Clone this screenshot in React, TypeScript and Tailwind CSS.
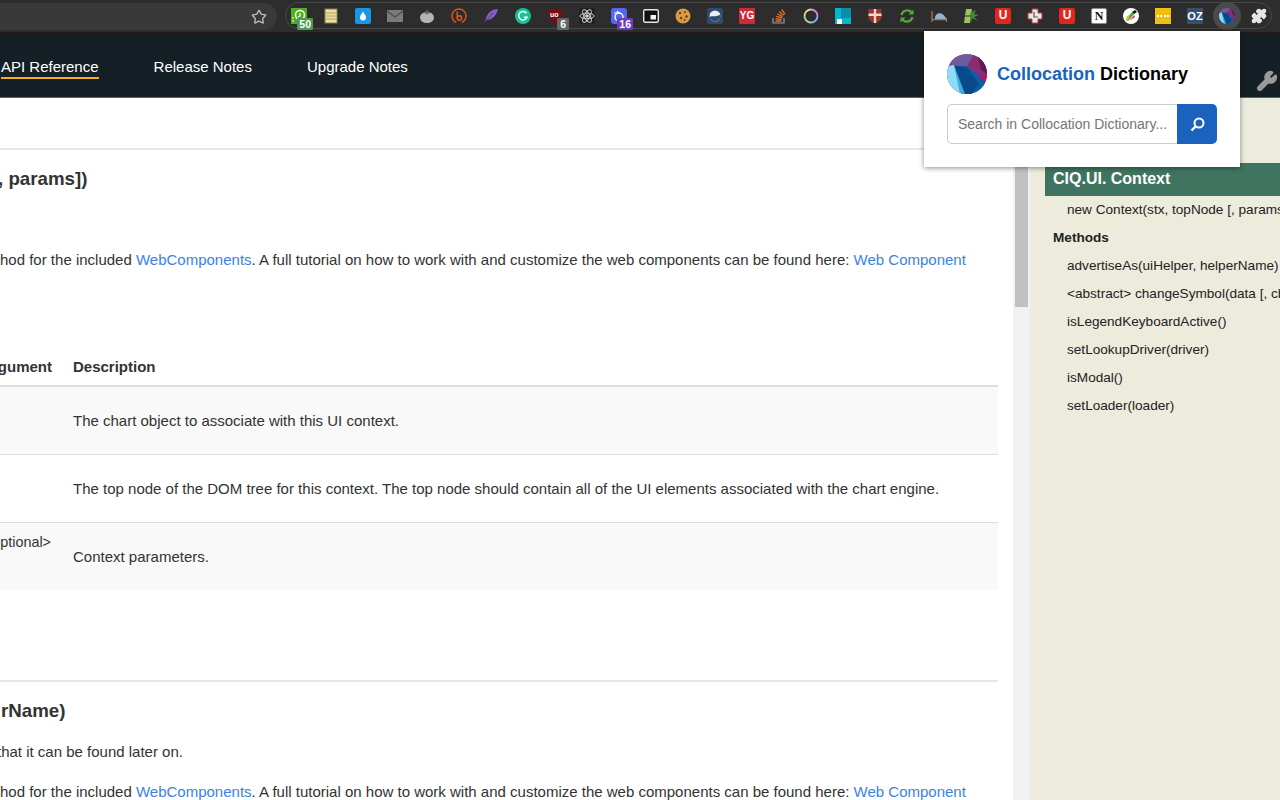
import type { ReactNode } from "react";
import { Star, Puzzle, Wrench } from "lucide-react";

const NAV_LINKS = [
  { label: "API Reference", active: true, gap: "mr-[55px]" },
  { label: "Release Notes", active: false, gap: "mr-[55px]" },
  { label: "Upgrade Notes", active: false, gap: "" },
];

const SIDEBAR_METHODS = [
  "advertiseAs(uiHelper, helperName)",
  "<abstract> changeSymbol(data [, cb])",
  "isLegendKeyboardActive()",
  "setLookupDriver(driver)",
  "isModal()",
  "setLoader(loader)",
];

function Logo({ size }: { size: number }) {
  return (
    <svg width={size} height={size} viewBox="0 0 40 40">
      <defs>
        <clipPath id={`logo-${size}`}>
          <circle cx="20" cy="20" r="20" />
        </clipPath>
      </defs>
      <g clipPath={`url(#logo-${size})`}>
        <rect width="40" height="40" fill="#7d3480" />
        <path d="M0 0L28 0L20 12L5 12Z" fill="#6f5a9e" />
        <path d="M20 12L28 0L40 0L40 18Z" fill="#8c2c70" />
        <path d="M30 0L40 0L40 20L34 16Z" fill="#5f1c52" />
        <path d="M32 22L40 20L40 36L34 30Z" fill="#b5146c" />
        <path d="M5 12L20 12L40 30L40 40L12 40Z" fill="#0a5ea6" />
        <path d="M6 11L20 14L32 30L24 40L14 40Z" fill="#064a8c" />
        <path d="M0 12L7 11L15 40L0 40Z" fill="#8edcf6" />
        <path d="M7 11L18 40L13 40Z" fill="#3fa9dc" />
      </g>
    </svg>
  );
}

function Badge({ text, bg }: { text: string; bg: string }) {
  return (
    <span
      className={`absolute top-[10px] -right-[6px] h-[12px] px-[2px] rounded-[1px] text-white text-[10.5px] leading-[13px] font-bold ${bg}`}
    >
      {text}
    </span>
  );
}

const ICONS: ReactNode[] = [
  <div key="timer" className="relative w-[16px] h-[16px]">
    <svg width="16" height="16" viewBox="0 0 16 16">
      <rect width="16" height="16" fill="#4caf1c" />
      <circle cx="9" cy="7" r="4.5" fill="none" stroke="#fff" strokeWidth="1.5" />
      <path d="M9 5V8L7 9M1 13H3M1 10H3" stroke="#fff" strokeWidth="1.2" fill="none" />
    </svg>
    <Badge text="50" bg="bg-[#4e9a52]" />
  </div>,
  <svg key="note" width="16" height="16" viewBox="0 0 16 16">
    <rect x="2" y="1" width="12" height="14" fill="#ecdfa0" stroke="#8a7a58" />
    <path d="M3 5H13M3 8H13M3 11H13" stroke="#b0a060" />
  </svg>,
  <svg key="drop" width="16" height="16" viewBox="0 0 16 16">
    <rect width="16" height="16" rx="2" fill="#1a96e8" />
    <path d="M8 3.5C9.5 6 11 7.5 11 9.5A3 3 0 0 1 5 9.5C5 7.5 6.5 6 8 3.5Z" fill="#fff" />
  </svg>,
  <svg key="mail" width="16" height="16" viewBox="0 0 16 16">
    <rect y="2" width="16" height="12" fill="#7b7b7b" />
    <path d="M0 3L8 9L16 3" fill="none" stroke="#4b4b4b" strokeWidth="1.2" />
  </svg>,
  <svg key="tomato" width="16" height="16" viewBox="0 0 16 16">
    <ellipse cx="8" cy="9.5" rx="7" ry="5.5" fill="#b4b4b4" />
    <path d="M5 5L8 6.5L11 5L9 3.5L8 1.5L7 3.5Z" fill="#6b6b6b" />
  </svg>,
  <svg key="bitly" width="16" height="16" viewBox="0 0 16 16" fill="none" stroke="#e2571e" strokeWidth="1.4">
    <path d="M5 14.3A7 7 0 1 1 11 14.3" />
    <path d="M6.2 3.5V10" />
    <circle cx="8.4" cy="10" r="2.2" />
  </svg>,
  <svg key="feather" width="16" height="16" viewBox="0 0 16 16">
    <path d="M15 1C9 1 4 5 3 11L1 15L4 12C9 12 13 8 15 1Z" fill="#8a5cc4" />
    <path d="M1 15L10 5" stroke="#3a2a55" strokeWidth="0.7" />
  </svg>,
  <svg key="grammarly" width="16" height="16" viewBox="0 0 16 16">
    <circle cx="8" cy="8" r="8" fill="#15c39a" />
    <path d="M11.5 5.2A4.3 4.3 0 1 0 12 9.3H9" fill="none" stroke="#fff" strokeWidth="1.5" />
  </svg>,
  <div key="ublock" className="relative w-[16px] h-[16px]">
    <svg width="16" height="16" viewBox="0 0 16 16">
      <path d="M8 0.5L15 2.5C15 9 13 13 8 15.5C3 13 1 9 1 2.5Z" fill="#7a0c10" />
    </svg>
    <span className="absolute top-[3px] left-[3px] text-white text-[7px] leading-[8px] font-bold">uo</span>
    <Badge text="6" bg="bg-[#666666] px-[3px]" />
  </div>,
  <svg key="atom" width="16" height="16" viewBox="0 0 16 16" fill="none" stroke="#d8d8d8" strokeWidth="0.9">
    <rect width="16" height="16" fill="#222222" stroke="none" />
    <ellipse cx="8" cy="8" rx="7" ry="2.8" />
    <ellipse cx="8" cy="8" rx="7" ry="2.8" transform="rotate(60 8 8)" />
    <ellipse cx="8" cy="8" rx="7" ry="2.8" transform="rotate(120 8 8)" />
    <circle cx="8" cy="8" r="1.3" fill="#d8d8d8" />
  </svg>,
  <div key="tasks" className="relative w-[16px] h-[16px]">
    <svg width="16" height="16" viewBox="0 0 16 16">
      <rect width="16" height="16" rx="3" fill="#5468ee" />
      <circle cx="8" cy="9" r="4" fill="none" stroke="#fff" strokeWidth="1.4" />
      <path d="M6 3L8 5L3 5" stroke="#fff" strokeWidth="1.2" fill="none" />
    </svg>
    <Badge text="16" bg="bg-[#6c3cc0]" />
  </div>,
  <svg key="pip" width="16" height="16" viewBox="0 0 16 16">
    <rect x="0.7" y="1.7" width="14.6" height="12.6" rx="1.5" fill="#111111" stroke="#e6e6e6" strokeWidth="1.4" />
    <rect x="7.5" y="7" width="5.5" height="4.5" fill="#f2f2f2" />
  </svg>,
  <svg key="cookie" width="16" height="16" viewBox="0 0 16 16">
    <circle cx="8" cy="8" r="7.5" fill="#d99a45" />
    <g fill="#6b3d16">
      <circle cx="5" cy="5" r="1.2" />
      <circle cx="10" cy="4" r="1" />
      <circle cx="11.5" cy="8.5" r="1.2" />
      <circle cx="6" cy="10" r="1.2" />
      <circle cx="9.5" cy="12" r="1" />
    </g>
  </svg>,
  <svg key="moon" width="16" height="16" viewBox="0 0 16 16">
    <rect width="16" height="16" rx="2" fill="#2f4a6d" />
    <circle cx="8" cy="8" r="5.5" fill="#e9eef4" />
    <path d="M2.5 9C5 7 7 10 13.5 6.5A5.5 5.5 0 0 1 2.5 9Z" fill="#2f4a6d" />
  </svg>,
  <div key="yg" className="w-[16px] h-[16px] bg-[#cc2a36] rounded-[1px] text-white text-[10px] leading-[16px] font-bold text-center">
    YG
  </div>,
  <svg key="stack" width="16" height="16" viewBox="0 0 16 16" fill="none">
    <path d="M2 10V15H13V10" stroke="#9a9a9a" strokeWidth="1.2" />
    <path d="M4.5 13H10.5M4.6 10.8L10.6 11.4M5.2 8.3L11 9.9M6.4 5.8L11.6 8.6M8.3 3.4L12.7 7.3M10.8 1.4L13.9 6.2" stroke="#e8731e" strokeWidth="1.3" />
  </svg>,
  <svg key="ring" width="16" height="16" viewBox="0 0 16 16" fill="none" strokeWidth="1.8">
    <path d="M8 1.5A6.5 6.5 0 0 1 14.5 8" stroke="#d58ad8" />
    <path d="M14.5 8A6.5 6.5 0 0 1 8 14.5" stroke="#8ab4e8" />
    <path d="M8 14.5A6.5 6.5 0 0 1 1.5 8" stroke="#a8d8a0" />
    <path d="M1.5 8A6.5 6.5 0 0 1 8 1.5" stroke="#e8d88a" />
  </svg>,
  <svg key="teal" width="16" height="16" viewBox="0 0 16 16">
    <rect width="16" height="16" fill="#05b5cf" />
    <rect x="6" y="0" width="10" height="10" fill="#0a8fa8" />
    <rect x="2" y="11" width="5" height="5" fill="#ffffff" />
  </svg>,
  <svg key="crest" width="16" height="16" viewBox="0 0 16 16">
    <path d="M1.5 1H14.5V9C14.5 12 11 14.5 8 15.5C5 14.5 1.5 12 1.5 9Z" fill="#a3302e" />
    <path d="M6.8 1H9.2V15H6.8ZM1.5 5.5H14.5V8H1.5Z" fill="#e8dcc4" />
  </svg>,
  <svg key="sync" width="16" height="16" viewBox="0 0 16 16" fill="none" stroke="#55a83a" strokeWidth="2.2">
    <path d="M2.5 7A5.8 5.8 0 0 1 13 5" />
    <path d="M13.5 9A5.8 5.8 0 0 1 3 11" />
    <path d="M14.5 1.5V6.5H9.5L14.5 1.5ZM1.5 14.5V9.5H6.5L1.5 14.5Z" fill="#55a83a" stroke="none" />
  </svg>,
  <svg key="bed" width="16" height="16" viewBox="0 0 16 16">
    <path d="M4 9C5 5 9 4 12 6.5L15 10V11H4Z" fill="#8fb8d8" />
    <path d="M1 3V14M15.5 10V14M1 11.5H15.5" stroke="#a8785a" strokeWidth="1.3" fill="none" />
  </svg>,
  <svg key="bamboo" width="16" height="16" viewBox="0 0 16 16">
    <path d="M1 15L3 1H9L7 15Z" fill="#9ac45c" />
    <path d="M7 5L13 2L11 6L16 7L11 9L15 13L9 10L8 15Z" fill="#3f8a3c" />
    <path d="M2 8H8" stroke="#2d2d2d" />
  </svg>,
  <div key="u1" className="w-[16px] h-[16px] bg-[#e3261c] rounded-[2px] text-white text-[12px] leading-[14px] font-bold text-center">
    U
  </div>,
  <svg key="plus" width="16" height="16" viewBox="0 0 16 16">
    <path d="M5 1H11V5H15V11H11V15H5V11H1V5H5Z" fill="#e8e8e8" stroke="#c23a3a" strokeWidth="1" />
    <path d="M7 4V9H11" stroke="#555555" strokeWidth="1.2" fill="none" />
  </svg>,
  <div key="u2" className="w-[16px] h-[16px] bg-[#e3261c] rounded-[2px] text-white text-[12px] leading-[14px] font-bold text-center">
    U
  </div>,
  <div key="notion" className="w-[16px] h-[16px] bg-white border border-[#888888] rounded-[2px] text-[#111111] text-[12px] leading-[14px] font-bold text-center font-['Liberation_Serif',serif]">
    N
  </div>,
  <svg key="palette" width="16" height="16" viewBox="0 0 16 16">
    <circle cx="8" cy="8" r="8" fill="#ffffff" />
    <path d="M3 12L9 4L11 6L5 13Z" fill="#2fae3a" />
    <path d="M5 13L3 9L7 6Z" fill="#e6c21c" />
    <path d="M9 4L12 2L14 4L11 6Z" fill="#111111" />
    <path d="M6 13L11 7L12 9Z" fill="#e32d6a" />
  </svg>,
  <div key="dots" className="w-[16px] h-[16px] bg-[#eec011] flex items-center justify-center gap-[1.5px]">
    <span className="w-[2px] h-[2px] bg-white" />
    <span className="w-[2px] h-[2px] bg-white" />
    <span className="w-[2px] h-[2px] bg-white" />
    <span className="w-[2px] h-[2px] bg-white" />
  </div>,
  <div key="oz" className="w-[16px] h-[16px] bg-[#34506f] text-white text-[11px] leading-[16px] font-bold text-center">
    OZ
  </div>,
  <div key="active" className="w-[28px] h-[28px] rounded-full bg-[#4a4a4a] flex items-center justify-center shrink-0">
    <Logo size={16} />
  </div>,
  <Puzzle key="puzzle" className="w-[16px] h-[16px] text-[#e6e6e6] fill-[#e6e6e6]" />,
];

function Toolbar() {
  return (
    <div className="h-[35px] shrink-0 bg-[#2d2d2d] border-b-[3px] border-[#1d1d1d] flex items-start pt-[3px]">
      <div className="w-[277px] h-[27px] bg-[#393939] rounded-r-full flex items-center justify-end pr-[10px]">
        <Star className="w-[16px] h-[16px] text-[#bdbdbd]" strokeWidth={2} />
      </div>
      <div className="ml-[8px] w-[987px] h-[27px] -mt-[1px] border border-[#484848] rounded-full flex items-center">
        <div className="flex items-center -ml-[3px]">
          {ICONS.map((icon, i) => (
            <div key={i} className="w-[32px] h-[25px] flex items-center justify-center shrink-0">
              {icon}
            </div>
          ))}
        </div>
      </div>
    </div>
  );
}

function Nav() {
  return (
    <div className="h-[63px] shrink-0 bg-[#141f26] border-b border-[#55636b] flex items-center text-[15px] text-white">
      <div className="flex items-center pl-[1px] mt-[3px]">
        {NAV_LINKS.map((link) => (
          <span
            key={link.label}
            className={`${link.gap} ${link.active ? "border-b-2 border-[#f5ae1b]" : "border-b-2 border-transparent"} leading-[20px]`}
          >
            {link.label}
          </span>
        ))}
      </div>
      <div className="flex-1" />
      <Wrench className="self-end mb-[5px] w-[22px] h-[22px] mr-[2px] text-[#9a9a9a] fill-[#9a9a9a]" />
    </div>
  );
}

function Row({ text, bg }: { text: string; bg: string }) {
  return (
    <div className={`flex h-[68px] border-b border-[#dddddd] ${bg}`}>
      <div className="w-[52px] shrink-0" />
      <div className="pl-[21px] pt-[2px] flex items-center">{text}</div>
    </div>
  );
}

function Main() {
  return (
    <div className="w-[1013px] shrink-0 bg-white overflow-hidden text-[15px] text-[#333333]">
      <div className="w-[998px]">
        <div className="h-[50px]" />
        <div className="h-[2px] bg-[#e7e7e7]" />
        <h4 className="mt-[17px] -ml-[2px] text-[18.72px] leading-[24px] font-bold whitespace-nowrap">, params])</h4>
        <p className="mt-[58px] leading-[22px] whitespace-nowrap">
          hod for the included <a className="text-[#3b82e8]">WebComponents</a>. A full tutorial on how to work with and
          customize the web components can be found here: <a className="text-[#3b82e8]">Web Component</a>
        </p>
        <div className="mt-[85px] flex h-[22px] font-bold leading-[22px]">
          <div className="w-[52px] shrink-0 flex justify-end whitespace-nowrap">Argument</div>
          <div className="pl-[21px]">Description</div>
        </div>
        <div className="mt-[7px] h-[2px] bg-[#dddddd]" />
        <Row text="The chart object to associate with this UI context." bg="bg-[#f9f9f9]" />
        <Row
          text="The top node of the DOM tree for this context. The top node should contain all of the UI elements associated with the chart engine."
          bg="bg-white"
        />
        <div className="flex h-[67px] bg-[#f9f9f9]">
          <div className="w-[51px] shrink-0 flex justify-end whitespace-nowrap pt-[9px] text-[14.4px] leading-[20px]">&lt;optional&gt;</div>
          <div className="pl-[22px] pt-[2px] flex items-center">Context parameters.</div>
        </div>
        <div className="h-[90px]" />
        <div className="h-[2px] bg-[#e7e7e7]" />
        <h4 className="mt-[17px] ml-[1px] text-[18.72px] leading-[24px] font-bold whitespace-nowrap">rName)</h4>
        <p className="mt-[18px] -ml-[3px] leading-[22px] whitespace-nowrap">that it can be found later on.</p>
        <p className="mt-[18px] leading-[22px] whitespace-nowrap">
          hod for the included <a className="text-[#3b82e8]">WebComponents</a>. A full tutorial on how to work with and
          customize the web components can be found here: <a className="text-[#3b82e8]">Web Component</a>
        </p>
      </div>
    </div>
  );
}

function Scrollbar() {
  return (
    <div className="w-[17px] shrink-0 bg-[#f1f1f1] px-[2px]">
      <div className="h-[209px] bg-[#c1c1c1]" />
    </div>
  );
}

function Sidebar() {
  return (
    <div className="flex-1 min-w-0 bg-[#ecebdc] overflow-hidden pt-[65px] pl-[15px] text-[13.6px] text-[#222222] whitespace-nowrap">
      <div className="h-[33px] bg-[#3f7560] text-white text-[16px] font-bold leading-[31px] pl-[8px]">CIQ.UI. Context</div>
      <div className="pl-[22px] leading-[28px] h-[28px]">new Context(stx, topNode [, params])</div>
      <div className="pl-[8px] leading-[28px] h-[28px] font-bold">Methods</div>
      {SIDEBAR_METHODS.map((m) => (
        <div key={m} className="pl-[22px] leading-[28px] h-[28px]">
          {m}
        </div>
      ))}
    </div>
  );
}

function Popup() {
  return (
    <div className="absolute left-[924px] top-[31px] w-[316px] h-[136px] bg-white shadow-[0_1px_5px_rgba(0,0,0,0.45)] pt-[23px] px-[23px]">
      <div className="flex items-center h-[40px]">
        <Logo size={40} />
        <span className="ml-[10px] text-[18px] font-bold text-black">
          <span className="text-[#1a62bd]">Collocation</span> Dictionary
        </span>
      </div>
      <div className="flex mt-[10px] h-[40px] w-[270px]">
        <div className="w-[230px] border border-[#cccccc] border-r-0 rounded-l-[5px] pl-[10px] text-[14px] leading-[38px] text-[#757575] whitespace-nowrap overflow-hidden">
          Search in Collocation Dictionary...
        </div>
        <div className="w-[40px] bg-[#1a62bd] rounded-r-[5px] flex items-center justify-center">
          <svg width="15" height="15" viewBox="0 0 15 15" fill="none" stroke="#ffffff">
            <circle cx="9" cy="6" r="4.5" strokeWidth="2" />
            <path d="M5.5 9.5L1.5 13.5" strokeWidth="2.4" />
          </svg>
        </div>
      </div>
    </div>
  );
}

export default function App() {
  return (
    <div className="relative w-[1280px] h-[800px] overflow-hidden flex flex-col bg-white font-['Liberation_Sans',Arial,sans-serif]">
      <Toolbar />
      <Nav />
      <div className="flex flex-1 min-h-0">
        <Main />
        <Scrollbar />
        <Sidebar />
      </div>
      <Popup />
    </div>
  );
}
